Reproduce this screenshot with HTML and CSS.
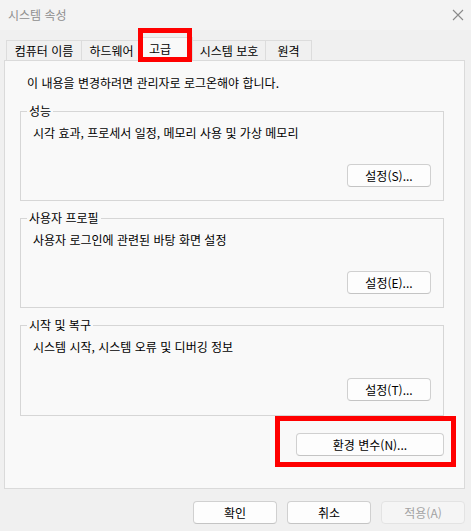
FILE: index.html
```html
<!DOCTYPE html>
<html lang="ko">
<head>
    <meta charset="UTF-8">
    <meta name="viewport" content="width=device-width, initial-scale=1.0">
    <title>시스템 속성</title>
    <link rel="stylesheet" href="styles.css">
</head>
<body>
    <div class="titlebar">
        <span class="title">시스템 속성</span>
        <svg class="close" width="12" height="12" viewBox="0 0 12 12">
            <path d="M1 1 L11 11 M11 1 L1 11" stroke="#8a8a8a" stroke-width="1.1" fill="none"/>
        </svg>
    </div>

    <div class="tabs">
        <div class="tab tab-name">컴퓨터 이름</div>
        <div class="tab tab-hw">하드웨어</div>
        <div class="tab tab-adv selected">고급</div>
        <div class="tab tab-prot">시스템 보호</div>
        <div class="tab tab-remote">원격</div>
    </div>

    <div class="panel">
        <p class="notice">이 내용을 변경하려면 관리자로 로그온해야 합니다.</p>

        <fieldset class="group">
            <legend>성능</legend>
            <p class="desc">시각 효과, 프로세서 일정, 메모리 사용 및 가상 메모리</p>
            <div class="group-actions"><button class="btn">설정(S)...</button></div>
        </fieldset>

        <fieldset class="group">
            <legend>사용자 프로필</legend>
            <p class="desc">사용자 로그인에 관련된 바탕 화면 설정</p>
            <div class="group-actions"><button class="btn">설정(E)...</button></div>
        </fieldset>

        <fieldset class="group group-last">
            <legend>시작 및 복구</legend>
            <p class="desc">시스템 시작, 시스템 오류 및 디버깅 정보</p>
            <div class="group-actions"><button class="btn">설정(T)...</button></div>
        </fieldset>

        <div class="env-row"><button class="btn btn-env">환경 변수(N)...</button></div>
    </div>

    <div class="footer">
        <button class="btn">확인</button>
        <button class="btn">취소</button>
        <button class="btn" disabled>적용(A)</button>
    </div>

    <div class="mark mark-tab"></div>
    <div class="mark mark-env"></div>
</body>
</html>
```

FILE: styles.css
```css
body { margin: 0; width: 471px; height: 531px; overflow: hidden; position: relative; background-color: #f0f0f0; font-family: "Noto Sans CJK KR", "Noto Sans", sans-serif; font-size: 12px; color: #000; }
p { margin: 0; }

.titlebar { height: 30px; display: flex; align-items: center; justify-content: space-between; padding: 0 7px 0 8px; background-color: #f3f3f3; box-sizing: border-box; }
.title { color: #8f8f8f; line-height: 16px; }

.tabs { display: flex; align-items: flex-end; height: 24px; margin: 7px 0 -1px 6px; position: relative; z-index: 1; }
.tab { height: 20px; line-height: 19px; margin-bottom: 1px; margin-right: -1px; box-sizing: border-box; border: 1px solid #dcdcdc; border-bottom: none; background-color: #f0f0f0; text-align: center; }
.tab.selected { height: 24px; line-height: 22px; margin-bottom: 0; background-color: #f9f9f9; position: relative; z-index: 1; }
.tab-name { width: 76px; }
.tab-hw { width: 61px; }
.tab-adv { width: 52px; padding-right: 14px; }
.tab-prot { width: 74px; }
.tab-remote { width: 47px; }

.panel { width: 461px; height: 429px; margin-left: 4px; box-sizing: border-box; border: 1px solid #dadada; background-color: #f9f9f9; }
.notice { line-height: 16px; padding: 14px 0 0 22px; }

.group { width: 424px; box-sizing: border-box; margin: 12px 0 0 15px; padding: 0 12px 13px 12px; border: 1px solid #d6d6d6; }
.group + .group { margin-top: 9px; }
.group-last { padding-bottom: 14px; }
.group legend { padding: 0 2px; margin-left: -6px; line-height: 16px; }
.desc { line-height: 16px; margin-top: 6px; }
.group-actions { display: flex; justify-content: flex-end; margin-top: 23px; }

.btn { width: 84px; height: 23px; padding: 0; box-sizing: border-box; border: 1px solid #d0d0d0; border-bottom-color: #c4c4c4; border-radius: 4px; background-color: #fdfdfd; font-family: inherit; font-size: 12px; color: #000; }
.btn:disabled { background-color: #f5f5f5; border-color: #e3e3e3; color: #a3a3a3; }

.env-row { display: flex; justify-content: flex-end; margin: 17px 20px 0 0; }
.btn-env { width: 148px; }

.footer { display: flex; justify-content: flex-end; gap: 10px; margin: 12px 6px 0 0; }

.mark { position: absolute; border: 5px solid #ff0000; box-sizing: border-box; z-index: 2; }
.mark-tab { left: 138px; top: 28px; width: 54px; height: 34px; }
.mark-env { left: 275px; top: 416px; width: 181px; height: 51px; }
```
